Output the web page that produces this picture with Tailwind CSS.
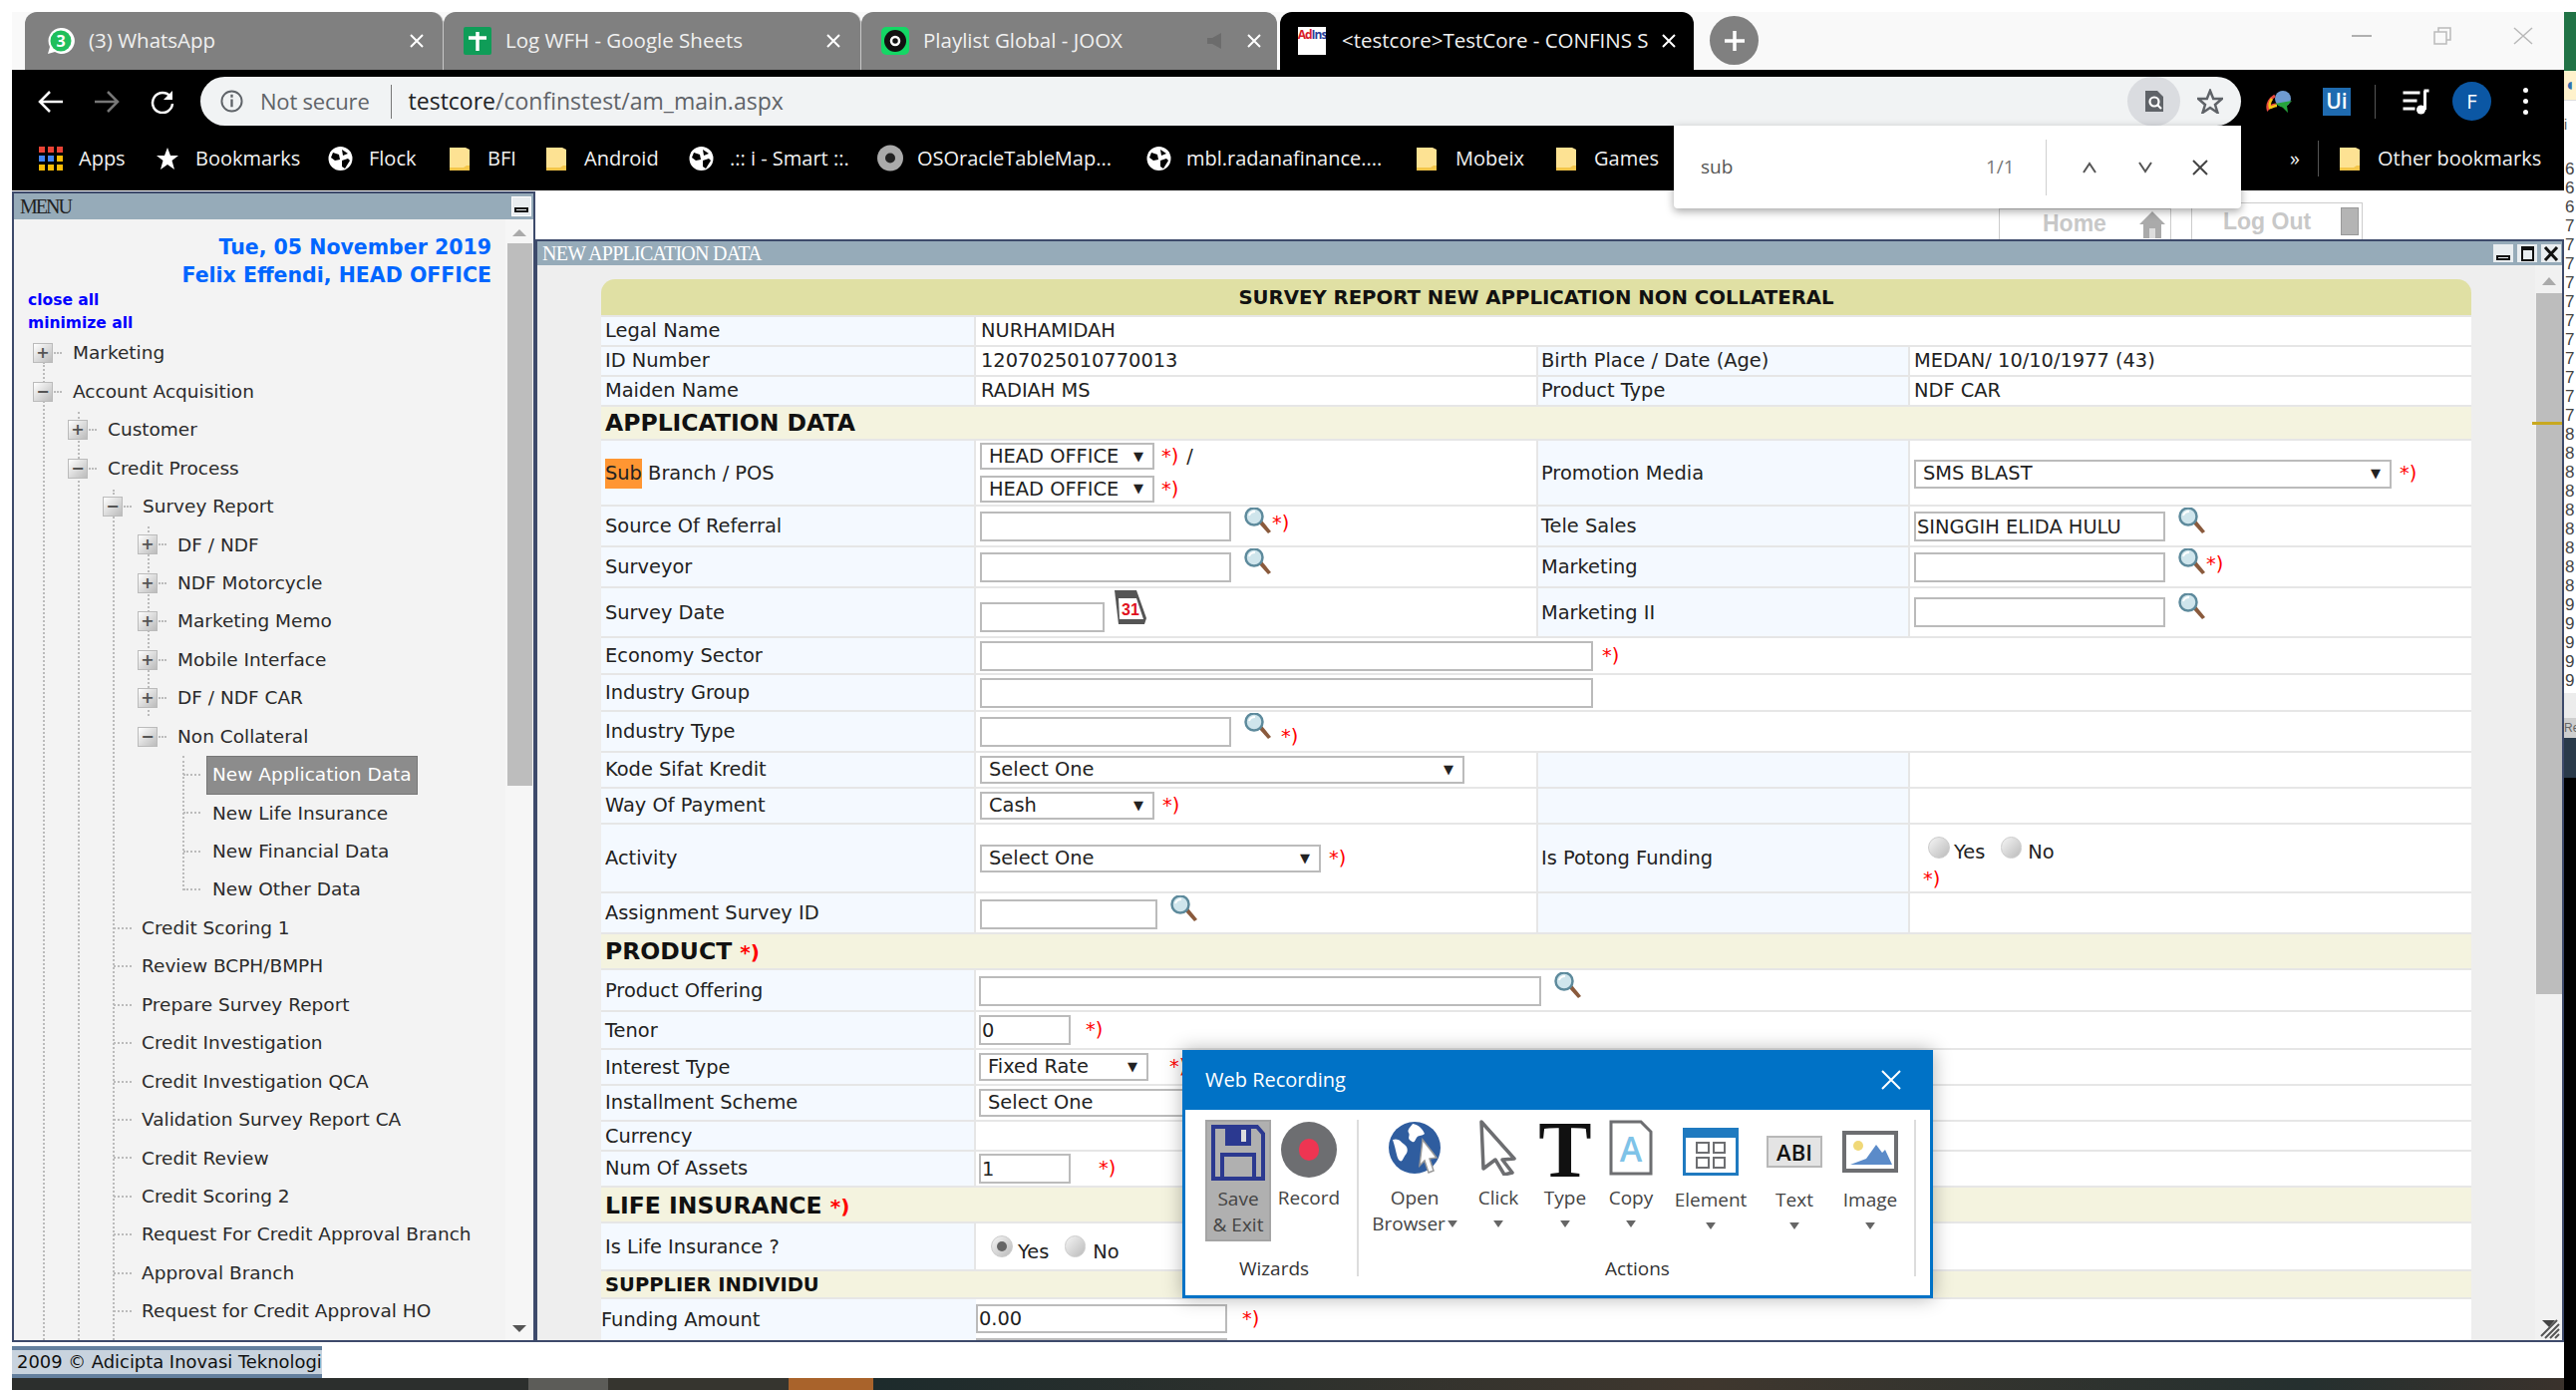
<!DOCTYPE html>
<html lang="en">
<head>
  <meta charset="UTF-8">
  <title>TestCore - CONFINS</title>
  <script src="https://cdn.jsdelivr.net/npm/@tailwindcss/browser@4"></script>
</head>
<body class="w-[2584px] h-[1394px] overflow-hidden bg-white relative flex font-['DejaVu_Sans',sans-serif] text-[#222]">
  <!-- shared icons -->
  <svg class="hidden">
    <symbol id="mag" viewBox="0 0 28 27">
      <path d="M15 16l9 10 3-2-9-11z" fill="#8a5a3c"/>
      <ellipse cx="10" cy="9" rx="8.5" ry="8.5" fill="#cfe5ec" stroke="#5d8a9c" stroke-width="2.5"/>
      <path d="M5 8c1-3 3-4 6-4" stroke="#fff" stroke-width="2" fill="none"/>
    </symbol>
    <symbol id="folder" viewBox="0 0 20 24">
      <path d="M0 1h16l4 2v20H0z" fill="#fde293"/>
      <path d="M0 21h14l3-2h3v5H0z" fill="#f4c64a"/>
    </symbol>
    <symbol id="globe" viewBox="0 0 25 24">
      <circle cx="12.500" cy="12" r="12" fill="#fff"/>
      <path d="M5 6l6 2 1 5-5 1-4-3zM14 14l6-2 2 2-5 8-3-2zM14 3l6 4-5 2z" fill="#000"/>
    </symbol>
    <symbol id="drop" viewBox="0 0 14 10">
      <path d="M0 0h14L7 10z" fill="#666"/>
    </symbol>
    <symbol id="tabx" viewBox="0 0 14 14">
      <path d="M1 1l12 12M13 1L1 13" stroke="#fff" stroke-width="2"/>
    </symbol>
  </svg>

  <div class="w-[12px] shrink-0"></div>

  <div class="w-[2560px] shrink-0 flex flex-col">
    <div class="h-[12px] bg-white"></div>

    <!-- tab strip -->
    <div class="h-[58px] bg-[#f9f9f9] flex pl-[13px] font-['Open_Sans',sans-serif] text-[20.500px] text-[#f0f0f0] relative">
      <div class="w-[420px] bg-[#808080] rounded-t-[12px] flex items-center pl-[22px] pr-[19px] border-r border-[#c8c8c8]">
        <svg class="w-[28px] h-[28px] shrink-0" viewBox="0 0 28 28"><path d="M14 1a13 13 0 1 1-6 24l-7 2 2-7A13 13 0 0 1 14 1z" fill="#fff"/><circle cx="14" cy="14" r="10.500" fill="#1fbf5c"/><text x="14" y="20" text-anchor="middle" font-size="16" font-weight="700" fill="#fff" font-family="Open Sans">3</text></svg>
        <span class="ml-[14px] flex-1 -mt-[2px]">(3) WhatsApp</span>
        <svg class="w-[14px] h-[14px]"><use href="#tabx"/></svg>
      </div>
      <div class="w-[419px] bg-[#808080] rounded-t-[12px] flex items-center pl-[20px] pr-[20px] border-r border-[#c8c8c8]">
        <svg class="w-[28px] h-[28px] shrink-0" viewBox="0 0 28 28"><rect width="28" height="28" rx="2" fill="#0f9d58"/><path d="M14 5v19M5 11h18" stroke="#fff" stroke-width="3.500"/></svg>
        <span class="ml-[14px] flex-1 -mt-[2px]">Log WFH - Google Sheets</span>
        <svg class="w-[14px] h-[14px]"><use href="#tabx"/></svg>
      </div>
      <div class="w-[417px] bg-[#808080] rounded-t-[12px] flex items-center pl-[20px] pr-[16px]">
        <svg class="w-[28px] h-[28px] shrink-0" viewBox="0 0 28 28"><rect width="28" height="28" rx="5" fill="#14d765"/><circle cx="14" cy="14" r="11" fill="#111"/><circle cx="14" cy="14" r="4" fill="none" stroke="#fff" stroke-width="2.500"/></svg>
        <span class="ml-[14px] flex-1 -mt-[2px]">Playlist Global - JOOX</span>
        <svg class="w-[16px] h-[16px] mr-[24px]" viewBox="0 0 16 16"><path d="M0 5h5l9-5v16l-9-5H0z" fill="#6c6c6c"/></svg>
        <svg class="w-[14px] h-[14px]"><use href="#tabx"/></svg>
      </div>
      <div class="ml-[3px] w-[415px] bg-black rounded-t-[12px] flex items-center pl-[18px] pr-[18px]">
        <div class="w-[28px] h-[28px] shrink-0 bg-white flex flex-col items-center overflow-hidden leading-none">
          <span class="text-[12px] font-bold text-[#d8202a] mt-[2px] tracking-[-1px]">Ad<span class="text-[#2a3f9a]">Ins</span></span>
        </div>
        <span class="ml-[16px] flex-1 -mt-[2px] whitespace-nowrap overflow-hidden">&lt;testcore&gt;TestCore - CONFINS S</span>
        <svg class="w-[14px] h-[14px] ml-[10px] shrink-0"><use href="#tabx"/></svg>
      </div>
      <div class="ml-[16px] mt-[4px] w-[49px] h-[49px] rounded-full bg-[#808080] flex items-center justify-center">
        <svg class="w-[24px] h-[24px]" viewBox="0 0 24 24"><path d="M12 2v20M2 12h20" stroke="#fff" stroke-width="3.500"/></svg>
      </div>
      <div class="flex-1 flex items-center justify-end pr-[31px] gap-[62px] pb-[10px]">
        <svg class="w-[20px] h-[4px]" viewBox="0 0 20 4"><path d="M0 2h20" stroke="#b0b0b0" stroke-width="2"/></svg>
        <svg class="w-[18px] h-[18px]" viewBox="0 0 18 18"><path d="M1 5h12v12H1zM5 5V1h12v12h-4" fill="none" stroke="#bbb" stroke-width="1.500"/></svg>
        <svg class="w-[20px] h-[18px]" viewBox="0 0 20 18"><path d="M1 1l18 16M19 1L1 17" stroke="#b8b8b8" stroke-width="1.500"/></svg>
      </div>
    </div>

    <!-- address bar -->
    <div class="h-[56px] bg-black flex items-center pt-[7px] relative font-['Open_Sans',sans-serif]">
      <div class="w-[189px] shrink-0 flex items-center pl-[26px] gap-[30px]">
        <svg class="w-[26px] h-[22px]" viewBox="0 0 26 22"><path d="M25 11H3M12 1L2 11l10 10" fill="none" stroke="#fff" stroke-width="2.500"/></svg>
        <svg class="w-[26px] h-[22px]" viewBox="0 0 26 22"><path d="M1 11h22M14 1l10 10-10 10" fill="none" stroke="#777" stroke-width="2.500"/></svg>
        <svg class="w-[26px] h-[24px]" viewBox="0 0 26 24"><path d="M21 7a10 10 0 1 0 2 7" fill="none" stroke="#fff" stroke-width="2.500"/><path d="M23 1v9H14z" fill="#fff"/></svg>
      </div>
      <div class="w-[2047px] h-[49px] bg-[#f1f3f4] rounded-full flex items-center pl-[20px] pr-[9px] text-[22px]">
        <svg class="w-[23px] h-[23px] shrink-0" viewBox="0 0 24 24"><circle cx="12" cy="12" r="10.500" fill="none" stroke="#5f6368" stroke-width="2"/><path d="M12 10v8M12 5v3" stroke="#5f6368" stroke-width="2.400"/></svg>
        <span class="ml-[17px] text-[#5f6368] tracking-[-0.2px]">Not secure</span>
        <div class="w-px h-[34px] bg-[#777] ml-[21px]"></div>
        <span class="ml-[17px] text-[#5f6368] text-[23px]"><span class="text-[#202124]">testcore</span>/confinstest/am_main.aspx</span>
        <div class="ml-auto w-[53px] h-[49px] rounded-full bg-[#dadce0] flex items-center justify-center">
          <svg class="w-[20px] h-[23px]" viewBox="0 0 20 23"><path d="M1 1h12l6 6v15H1z" fill="#5f6368"/><circle cx="10" cy="12" r="4.500" fill="none" stroke="#fff" stroke-width="2.200"/><path d="M13 15l4 4" stroke="#fff" stroke-width="2.200"/></svg>
        </div>
        <svg class="w-[26px] h-[25px] ml-[17px] mr-[9px]" viewBox="0 0 26 25"><path d="M13 2l3.200 8H25l-7 6 2.500 8-7.500-5-7.500 5L8 16l-7-6h8.800z" fill="none" stroke="#5f6368" stroke-width="2.500"/></svg>
      </div>
      <svg class="w-[27px] h-[24px] ml-[25px]" viewBox="0 0 27 24"><circle cx="17" cy="9" r="8" fill="#6f9bd1"/><path d="M9 6c-5 3-8 8-7 13 3-3 6-4 9-4" fill="none" stroke="#e9483f" stroke-width="3"/><path d="M6 9c-2 3-3 6-2 9 3-1 5-2 7-2" fill="none" stroke="#f5c518" stroke-width="2.500"/><path d="M9 14l17-3-5 5 1 7-5-5z" fill="#26a53c"/></svg>
      <div class="w-[28px] h-[28px] ml-[30px] bg-[#1f6bb0] text-white text-[21px] font-semibold flex items-center justify-center">Ui</div>
      <div class="w-px h-[34px] bg-[#555] ml-[24px]"></div>
      <svg class="w-[29px] h-[28px] ml-[26px]" viewBox="0 0 28 28"><path d="M1 5h17M1 13h14M1 21h12" stroke="#fff" stroke-width="3"/><path d="M22 3h5M23 3v19" stroke="#fff" stroke-width="3"/><circle cx="19" cy="22" r="4.500" fill="#fff"/></svg>
      <div class="w-[39px] h-[39px] ml-[22px] rounded-full bg-[#0b57a4] text-white text-[20px] flex items-center justify-center">F</div>
      <div class="ml-[32px] flex flex-col gap-[6px]">
        <div class="w-[5px] h-[5px] rounded-full bg-white"></div>
        <div class="w-[5px] h-[5px] rounded-full bg-white"></div>
        <div class="w-[5px] h-[5px] rounded-full bg-white"></div>
      </div>
    </div>

    <!-- bookmarks -->
    <div class="h-[65px] bg-black flex items-center pl-[27px] font-['Open_Sans',sans-serif] text-[20px] text-[#f2f2f2] whitespace-nowrap">
      <svg class="w-[24px] h-[24px] shrink-0" viewBox="0 0 24 24"><path fill="#ea4335" d="M0 0h6v6H0zM9 0h6v6H9zM18 0h6v6h-6z"/><path fill="#4285f4" d="M0 9h6v6H0zM9 9h6v6H9z"/><path fill="#fbbc05" d="M18 9h6v6h-6zM0 18h6v6H0zM9 18h6v6H9zM18 18h6v6h-6z"/></svg>
      <span class="w-[78px] ml-[16px] shrink-0">Apps</span>
      <svg class="w-[22px] h-[22px] shrink-0" viewBox="0 0 22 22"><path d="M11 0l3 8h8l-6.500 5 2.500 9-7-5-7 5 2.500-9L0 8h8z" fill="#fff"/></svg>
      <span class="w-[133px] ml-[17px] shrink-0">Bookmarks</span>
      <svg class="w-[25px] h-[24px] shrink-0"><use href="#globe"/></svg>
      <span class="w-[81px] ml-[16px] shrink-0">Flock</span>
      <svg class="w-[20px] h-[24px] shrink-0"><use href="#folder"/></svg>
      <span class="w-[59px] ml-[18px] shrink-0">BFI</span>
      <svg class="w-[20px] h-[24px] shrink-0"><use href="#folder"/></svg>
      <span class="w-[105px] ml-[18px] shrink-0">Android</span>
      <svg class="w-[25px] h-[24px] shrink-0"><use href="#globe"/></svg>
      <span class="w-[148px] ml-[16px] shrink-0">.:: i - Smart ::.</span>
      <svg class="w-[26px] h-[27px] shrink-0" viewBox="0 0 26 27"><circle cx="13" cy="13.500" r="13" fill="#aaa"/><circle cx="13" cy="13.500" r="5" fill="#222"/></svg>
      <span class="w-[230px] ml-[14px] shrink-0 overflow-hidden">OSOracleTableMap...</span>
      <svg class="w-[25px] h-[24px] shrink-0"><use href="#globe"/></svg>
      <span class="w-[231px] ml-[15px] shrink-0">mbl.radanafinance....</span>
      <svg class="w-[20px] h-[24px] shrink-0"><use href="#folder"/></svg>
      <span class="w-[101px] ml-[19px] shrink-0">Mobeix</span>
      <svg class="w-[20px] h-[24px] shrink-0"><use href="#folder"/></svg>
      <span class="w-[698px] ml-[18px] shrink-0">Games</span>
      <span class="w-[28px] shrink-0">»</span>
      <div class="w-px h-[36px] bg-[#555] shrink-0"></div>
      <svg class="w-[20px] h-[24px] ml-[21px] shrink-0"><use href="#folder"/></svg>
      <span class="ml-[18px] shrink-0">Other bookmarks</span>
    </div>

    <!-- application area -->
    <div class="h-[1155px] flex">
      <!-- left menu -->
      <aside class="w-[525px] shrink-0 mt-[1px] border-2 border-[#3d4a6b] flex flex-col">
        <div class="h-[26px] shrink-0 bg-[#96abb9] flex items-center justify-between pl-[6px] pr-[2px] font-['Liberation_Serif',serif] text-[20px] text-[#222] tracking-[-2px]">
          <span>MENU</span>
          <div class="w-[20px] h-[20px] bg-[#e9edf0] border border-white flex items-end justify-center pb-[3px]"><div class="w-[14px] h-[5px] border-2 border-[#111]"></div></div>
        </div>
        <div class="flex-1 flex min-h-0 bg-[#f3f3f3]">
          <div class="w-[493px] shrink-0 relative overflow-hidden">
            <!-- tree guides -->
            <div class="absolute left-[29px] top-[143px] bottom-0 border-l-2 border-dotted border-[#bbb]"></div>
            <div class="absolute left-[64px] top-[193px] bottom-0 border-l-2 border-dotted border-[#bbb]"></div>
            <div class="absolute left-[99px] top-[271px] bottom-0 border-l-2 border-dotted border-[#bbb]"></div>
            <div class="absolute left-[134px] top-[308px] h-[190px] border-l-2 border-dotted border-[#bbb]"></div>
            <div class="absolute left-[169px] top-[538px] h-[135px] border-l-2 border-dotted border-[#bbb]"></div>

            <div class="pt-[14px] pr-[14px] text-right text-[#0066ff] font-bold text-[20.500px] leading-[28px]">
              <div>Tue, 05 November 2019</div>
              <div>Felix Effendi, HEAD OFFICE</div>
            </div>
            <div class="pl-[14px] text-[#0000ff] font-bold text-[15.500px] leading-[23px]">
              <div>close all</div>
              <div>minimize all</div>
            </div>

            <div class="relative -mt-[1px] text-[18.500px] text-[#2a2a2a]">
              <div class="flex items-center h-[38.45px] pl-[19px]"><span class="w-[20px] h-[20px] bg-linear-to-br from-white to-[#bbb] border border-[#bbb] flex items-center justify-center text-[16px] font-bold leading-none text-[#555]">+</span><span class="w-[8px] ml-[1px] border-t-2 border-dotted border-[#bbb]"></span><span class="ml-[11px]">Marketing</span></div>
              <div class="flex items-center h-[38.45px] pl-[19px]"><span class="w-[20px] h-[20px] bg-linear-to-br from-white to-[#bbb] border border-[#bbb] flex items-center justify-center text-[16px] font-bold leading-none text-[#555]">−</span><span class="w-[8px] ml-[1px] border-t-2 border-dotted border-[#bbb]"></span><span class="ml-[11px]">Account Acquisition</span></div>
              <div class="flex items-center h-[38.45px] pl-[54px]"><span class="w-[20px] h-[20px] bg-linear-to-br from-white to-[#bbb] border border-[#bbb] flex items-center justify-center text-[16px] font-bold leading-none text-[#555]">+</span><span class="w-[8px] ml-[1px] border-t-2 border-dotted border-[#bbb]"></span><span class="ml-[11px]">Customer</span></div>
              <div class="flex items-center h-[38.45px] pl-[54px]"><span class="w-[20px] h-[20px] bg-linear-to-br from-white to-[#bbb] border border-[#bbb] flex items-center justify-center text-[16px] font-bold leading-none text-[#555]">−</span><span class="w-[8px] ml-[1px] border-t-2 border-dotted border-[#bbb]"></span><span class="ml-[11px]">Credit Process</span></div>
              <div class="flex items-center h-[38.45px] pl-[89px]"><span class="w-[20px] h-[20px] bg-linear-to-br from-white to-[#bbb] border border-[#bbb] flex items-center justify-center text-[16px] font-bold leading-none text-[#555]">−</span><span class="w-[8px] ml-[1px] border-t-2 border-dotted border-[#bbb]"></span><span class="ml-[11px]">Survey Report</span></div>
              <div class="flex items-center h-[38.45px] pl-[124px]"><span class="w-[20px] h-[20px] bg-linear-to-br from-white to-[#bbb] border border-[#bbb] flex items-center justify-center text-[16px] font-bold leading-none text-[#555]">+</span><span class="w-[8px] ml-[1px] border-t-2 border-dotted border-[#bbb]"></span><span class="ml-[11px]">DF / NDF</span></div>
              <div class="flex items-center h-[38.45px] pl-[124px]"><span class="w-[20px] h-[20px] bg-linear-to-br from-white to-[#bbb] border border-[#bbb] flex items-center justify-center text-[16px] font-bold leading-none text-[#555]">+</span><span class="w-[8px] ml-[1px] border-t-2 border-dotted border-[#bbb]"></span><span class="ml-[11px]">NDF Motorcycle</span></div>
              <div class="flex items-center h-[38.45px] pl-[124px]"><span class="w-[20px] h-[20px] bg-linear-to-br from-white to-[#bbb] border border-[#bbb] flex items-center justify-center text-[16px] font-bold leading-none text-[#555]">+</span><span class="w-[8px] ml-[1px] border-t-2 border-dotted border-[#bbb]"></span><span class="ml-[11px]">Marketing Memo</span></div>
              <div class="flex items-center h-[38.45px] pl-[124px]"><span class="w-[20px] h-[20px] bg-linear-to-br from-white to-[#bbb] border border-[#bbb] flex items-center justify-center text-[16px] font-bold leading-none text-[#555]">+</span><span class="w-[8px] ml-[1px] border-t-2 border-dotted border-[#bbb]"></span><span class="ml-[11px]">Mobile Interface</span></div>
              <div class="flex items-center h-[38.45px] pl-[124px]"><span class="w-[20px] h-[20px] bg-linear-to-br from-white to-[#bbb] border border-[#bbb] flex items-center justify-center text-[16px] font-bold leading-none text-[#555]">+</span><span class="w-[8px] ml-[1px] border-t-2 border-dotted border-[#bbb]"></span><span class="ml-[11px]">DF / NDF CAR</span></div>
              <div class="flex items-center h-[38.45px] pl-[124px]"><span class="w-[20px] h-[20px] bg-linear-to-br from-white to-[#bbb] border border-[#bbb] flex items-center justify-center text-[16px] font-bold leading-none text-[#555]">−</span><span class="w-[8px] ml-[1px] border-t-2 border-dotted border-[#bbb]"></span><span class="ml-[11px]">Non Collateral</span></div>
              <div class="flex items-center h-[38.45px] pl-[170px]"><span class="w-[17px] border-t-2 border-dotted border-[#bbb]"></span><span class="ml-[6px] px-[5px] h-[39px] flex items-center bg-[#8c8c8c] text-white border border-[#777]">New Application Data</span></div>
              <div class="flex items-center h-[38.45px] pl-[170px]"><span class="w-[17px] border-t-2 border-dotted border-[#bbb]"></span><span class="ml-[12px]">New Life Insurance</span></div>
              <div class="flex items-center h-[38.45px] pl-[170px]"><span class="w-[17px] border-t-2 border-dotted border-[#bbb]"></span><span class="ml-[12px]">New Financial Data</span></div>
              <div class="flex items-center h-[38.45px] pl-[170px]"><span class="w-[17px] border-t-2 border-dotted border-[#bbb]"></span><span class="ml-[12px]">New Other Data</span></div>
              <div class="flex items-center h-[38.45px] pl-[100px]"><span class="w-[18px] border-t-2 border-dotted border-[#bbb]"></span><span class="ml-[10px]">Credit Scoring 1</span></div>
              <div class="flex items-center h-[38.45px] pl-[100px]"><span class="w-[18px] border-t-2 border-dotted border-[#bbb]"></span><span class="ml-[10px]">Review BCPH/BMPH</span></div>
              <div class="flex items-center h-[38.45px] pl-[100px]"><span class="w-[18px] border-t-2 border-dotted border-[#bbb]"></span><span class="ml-[10px]">Prepare Survey Report</span></div>
              <div class="flex items-center h-[38.45px] pl-[100px]"><span class="w-[18px] border-t-2 border-dotted border-[#bbb]"></span><span class="ml-[10px]">Credit Investigation</span></div>
              <div class="flex items-center h-[38.45px] pl-[100px]"><span class="w-[18px] border-t-2 border-dotted border-[#bbb]"></span><span class="ml-[10px]">Credit Investigation QCA</span></div>
              <div class="flex items-center h-[38.45px] pl-[100px]"><span class="w-[18px] border-t-2 border-dotted border-[#bbb]"></span><span class="ml-[10px]">Validation Survey Report CA</span></div>
              <div class="flex items-center h-[38.45px] pl-[100px]"><span class="w-[18px] border-t-2 border-dotted border-[#bbb]"></span><span class="ml-[10px]">Credit Review</span></div>
              <div class="flex items-center h-[38.45px] pl-[100px]"><span class="w-[18px] border-t-2 border-dotted border-[#bbb]"></span><span class="ml-[10px]">Credit Scoring 2</span></div>
              <div class="flex items-center h-[38.45px] pl-[100px]"><span class="w-[18px] border-t-2 border-dotted border-[#bbb]"></span><span class="ml-[10px]">Request For Credit Approval Branch</span></div>
              <div class="flex items-center h-[38.45px] pl-[100px]"><span class="w-[18px] border-t-2 border-dotted border-[#bbb]"></span><span class="ml-[10px]">Approval Branch</span></div>
              <div class="flex items-center h-[38.45px] pl-[100px]"><span class="w-[18px] border-t-2 border-dotted border-[#bbb]"></span><span class="ml-[10px]">Request for Credit Approval HO</span></div>
            </div>
          </div>
          <!-- menu scrollbar -->
          <div class="flex-1 bg-[#f6f6f6] flex flex-col items-center pt-[10px] pb-[8px]">
            <div class="w-0 h-0 border-x-[7px] border-x-transparent border-b-[7px] border-b-[#aaa]"></div>
            <div class="w-[25px] h-[544px] bg-[#bdbdbd] mt-[7px]"></div>
            <div class="mt-auto w-0 h-0 border-x-[7px] border-x-transparent border-t-[7px] border-t-[#555]"></div>
          </div>
        </div>
      </aside>

      <!-- right column -->
      <div class="flex-1 flex flex-col min-w-0">
        <div class="h-[49px] shrink-0 flex justify-end items-end pr-[202px] font-['Liberation_Sans',sans-serif] font-bold text-[23px] text-[#c8c8c8] whitespace-nowrap">
          <div class="w-[173px] h-[31px] border-x border-t border-[#ccc] flex items-center pl-[43px] overflow-hidden leading-none">
            <span class="w-[96px] shrink-0 -mt-[2px]">Home</span>
            <svg class="w-[28px] h-[28px] shrink-0" viewBox="0 0 28 28"><path d="M14 1L1 14h4v14h18V14h4z" fill="#aaa"/><rect x="11" y="18" width="6" height="10" fill="#ddd"/></svg>
          </div>
          <div class="w-[172px] h-[37px] ml-[20px] border-x border-t border-[#ccc] flex items-center pl-[31px] overflow-hidden leading-none">
            <span class="w-[118px] shrink-0">Log Out</span>
            <div class="w-[18px] h-[28px] shrink-0 bg-[#b4b4b4] border border-[#999]"></div>
          </div>
        </div>

        <!-- new application panel -->
        <main class="flex-1 min-h-0 border-y-2 border-r-2 border-l-2 border-[#3d4a6b] flex flex-col">
          <div class="h-[24px] shrink-0 bg-[#96abb9] flex items-center justify-between pl-[5px] pr-[1px] font-['Liberation_Serif',serif] text-white text-[20px] tracking-[-0.75px]">
            <span>NEW APPLICATION DATA</span>
            <div class="flex gap-[4px]">
              <div class="w-[20px] h-[18px] bg-[#e9edf0] flex items-end justify-center pb-[2px]"><div class="w-[14px] h-[5px] border-2 border-[#111]"></div></div>
              <div class="w-[20px] h-[18px] bg-[#e9edf0] flex items-center justify-center"><div class="w-[13px] h-[15px] border-2 border-t-4 border-[#111]"></div></div>
              <div class="w-[20px] h-[18px] bg-[#e9edf0] flex items-center justify-center"><svg class="w-[16px] h-[15px]" viewBox="0 0 16 15"><path d="M2 1l12 13M14 1L2 14" stroke="#111" stroke-width="3"/></svg></div>
            </div>
          </div>

          <div class="flex-1 min-h-0 flex bg-[#eeeeee] relative overflow-hidden">
            <div class="w-[64px] shrink-0"></div>

            <!-- form table -->
            <div class="w-[1876px] shrink-0 pt-[14px] text-[19.400px]">
              <div class="h-[36px] pt-[2px] bg-[#e0e0a4] rounded-t-[14px] flex items-center justify-center font-bold text-[19.700px] text-[#111]">SURVEY REPORT NEW APPLICATION NON COLLATERAL</div>

              <div class="flex h-[30px] border-t-2 border-[#e6e6e6] bg-white">
                <div class="w-[376px] bg-[#f4f9ff] border-r-2 border-[#e6e6e6] pl-[4px] flex items-center">Legal Name</div>
                <div class="flex-1 pl-[5px] flex items-center">NURHAMIDAH</div>
              </div>
              <div class="flex h-[30px] border-t-2 border-[#e6e6e6] bg-white">
                <div class="w-[376px] bg-[#f4f9ff] border-r-2 border-[#e6e6e6] pl-[4px] flex items-center">ID Number</div>
                <div class="w-[562px] pl-[5px] flex items-center">1207025010770013</div>
                <div class="w-[375px] bg-[#f4f9ff] border-x-2 border-[#e6e6e6] pl-[3px] flex items-center">Birth Place / Date (Age)</div>
                <div class="flex-1 pl-[4px] flex items-center">MEDAN/ 10/10/1977 (43)</div>
              </div>
              <div class="flex h-[30px] border-t-2 border-[#e6e6e6] bg-white">
                <div class="w-[376px] bg-[#f4f9ff] border-r-2 border-[#e6e6e6] pl-[4px] flex items-center">Maiden Name</div>
                <div class="w-[562px] pl-[5px] flex items-center">RADIAH MS</div>
                <div class="w-[375px] bg-[#f4f9ff] border-x-2 border-[#e6e6e6] pl-[3px] flex items-center">Product Type</div>
                <div class="flex-1 pl-[4px] flex items-center">NDF CAR</div>
              </div>

              <div class="h-[36px] pt-[2px] border-y-2 border-[#e6e6e6] bg-[#f4f3df] flex items-center pl-[4px] font-bold text-[23.500px] text-[#111]">APPLICATION DATA</div>

              <div class="flex h-[64px] bg-white">
                <div class="w-[376px] bg-[#f4f9ff] border-r-2 border-[#e6e6e6] pl-[4px] pt-[2px] flex items-center"><span class="bg-[#ff9632]">Sub</span>&nbsp;Branch / POS</div>
                <div class="w-[562px] pl-[4px] flex flex-col justify-center gap-[3px]">
                  <div class="flex items-center"><div class="w-[175px] h-[27px] border-2 border-[#bbb] bg-white pl-[7px] pr-[9px] flex items-center justify-between">HEAD OFFICE<span class="text-[13px]">▼</span></div><span class="ml-[7px] text-[#f00]">*)</span><span class="ml-[8px]">/</span></div>
                  <div class="flex items-center"><div class="w-[175px] h-[27px] border-2 border-[#bbb] bg-white pl-[7px] pr-[9px] flex items-center justify-between">HEAD OFFICE<span class="text-[13px]">▼</span></div><span class="ml-[7px] text-[#f00]">*)</span></div>
                </div>
                <div class="w-[375px] bg-[#f4f9ff] border-x-2 border-[#e6e6e6] pl-[3px] pt-[2px] flex items-center">Promotion Media</div>
                <div class="flex-1 pl-[4px] pt-[2px] flex items-center"><div class="w-[479px] h-[29px] border-2 border-[#bbb] bg-white pl-[7px] pr-[9px] flex items-center justify-between">SMS BLAST<span class="text-[13px]">▼</span></div><span class="ml-[8px] text-[#f00]">*)</span></div>
              </div>

              <div class="flex h-[41px] border-t-2 border-[#e6e6e6] bg-white">
                <div class="w-[376px] bg-[#f4f9ff] border-r-2 border-[#e6e6e6] pl-[4px] flex items-center">Source Of Referral</div>
                <div class="w-[562px] pl-[4px] pt-[5px] flex items-start"><input class="w-[252px] h-[30px] border-2 border-[#bbb] bg-white"><svg class="w-[28px] h-[27px] ml-[13px] -mt-[4px]"><use href="#mag"/></svg><span class="text-[#f00] -mt-[3px]">*)</span></div>
                <div class="w-[375px] bg-[#f4f9ff] border-x-2 border-[#e6e6e6] pl-[3px] flex items-center">Tele Sales</div>
                <div class="flex-1 pl-[4px] pt-[5px] flex items-start"><input value="SINGGIH ELIDA HULU" class="w-[252px] h-[30px] border-2 border-[#bbb] bg-white pl-[1px]"><svg class="w-[28px] h-[27px] ml-[13px] -mt-[4px]"><use href="#mag"/></svg></div>
              </div>
              <div class="flex h-[41px] border-t-2 border-[#e6e6e6] bg-white">
                <div class="w-[376px] bg-[#f4f9ff] border-r-2 border-[#e6e6e6] pl-[4px] flex items-center">Surveyor</div>
                <div class="w-[562px] pl-[4px] pt-[5px] flex items-start"><input class="w-[252px] h-[30px] border-2 border-[#bbb] bg-white"><svg class="w-[28px] h-[27px] ml-[13px] -mt-[4px]"><use href="#mag"/></svg></div>
                <div class="w-[375px] bg-[#f4f9ff] border-x-2 border-[#e6e6e6] pl-[3px] flex items-center">Marketing</div>
                <div class="flex-1 pl-[4px] pt-[5px] flex items-start"><input class="w-[252px] h-[30px] border-2 border-[#bbb] bg-white"><svg class="w-[28px] h-[27px] ml-[13px] -mt-[4px]"><use href="#mag"/></svg><span class="text-[#f00] -mt-[3px]">*)</span></div>
              </div>
              <div class="flex h-[50px] border-t-2 border-[#e6e6e6] bg-white">
                <div class="w-[376px] bg-[#f4f9ff] border-r-2 border-[#e6e6e6] pl-[4px] pt-[2px] flex items-center">Survey Date</div>
                <div class="w-[562px] pl-[4px] pt-[14px] flex items-start">
                  <input class="w-[125px] h-[30px] border-2 border-[#bbb] bg-white">
                  <svg class="w-[36px] h-[36px] ml-[8px] -mt-[13px]" viewBox="0 0 36 36"><path d="M2 1h22l10 28-2 6H6z" fill="#555"/><path d="M6 9h18l7 21H7z" fill="#fff"/><text x="18" y="26" text-anchor="middle" font-size="16" font-weight="700" fill="#e01020" font-family="Liberation Sans">31</text></svg>
                </div>
                <div class="w-[375px] bg-[#f4f9ff] border-x-2 border-[#e6e6e6] pl-[3px] pt-[2px] flex items-center">Marketing II</div>
                <div class="flex-1 pl-[4px] pt-[9px] flex items-start"><input class="w-[252px] h-[30px] border-2 border-[#bbb] bg-white"><svg class="w-[28px] h-[27px] ml-[13px] -mt-[4px]"><use href="#mag"/></svg></div>
              </div>

              <div class="flex h-[37px] border-t-2 border-[#e6e6e6] bg-white">
                <div class="w-[376px] bg-[#f4f9ff] border-r-2 border-[#e6e6e6] pl-[4px] flex items-center">Economy Sector</div>
                <div class="flex-1 pl-[4px] flex items-center"><input class="w-[615px] h-[30px] border-2 border-[#bbb] bg-white"><span class="ml-[9px] text-[#f00]">*)</span></div>
              </div>
              <div class="flex h-[37px] border-t-2 border-[#e6e6e6] bg-white">
                <div class="w-[376px] bg-[#f4f9ff] border-r-2 border-[#e6e6e6] pl-[4px] flex items-center">Industry Group</div>
                <div class="flex-1 pl-[4px] flex items-center"><input class="w-[615px] h-[30px] border-2 border-[#bbb] bg-white"></div>
              </div>
              <div class="flex h-[41px] border-t-2 border-[#e6e6e6] bg-white">
                <div class="w-[376px] bg-[#f4f9ff] border-r-2 border-[#e6e6e6] pl-[4px] flex items-center">Industry Type</div>
                <div class="flex-1 pl-[4px] pt-[5px] flex items-start"><input class="w-[252px] h-[30px] border-2 border-[#bbb] bg-white"><svg class="w-[28px] h-[27px] ml-[13px] -mt-[4px]"><use href="#mag"/></svg><span class="ml-[9px] mt-[5px] text-[#f00]">*)</span></div>
              </div>

              <div class="flex h-[36px] border-t-2 border-[#e6e6e6] bg-white">
                <div class="w-[376px] bg-[#f4f9ff] border-r-2 border-[#e6e6e6] pl-[4px] flex items-center">Kode Sifat Kredit</div>
                <div class="w-[562px] pl-[4px] flex items-center"><div class="w-[486px] h-[28px] border-2 border-[#bbb] bg-white pl-[7px] pr-[9px] flex items-center justify-between">Select One<span class="text-[13px]">▼</span></div></div>
                <div class="w-[375px] bg-[#f4f9ff] border-x-2 border-[#e6e6e6]"></div>
                <div class="flex-1"></div>
              </div>
              <div class="flex h-[36px] border-t-2 border-[#e6e6e6] bg-white">
                <div class="w-[376px] bg-[#f4f9ff] border-r-2 border-[#e6e6e6] pl-[4px] flex items-center">Way Of Payment</div>
                <div class="w-[562px] pl-[4px] flex items-center"><div class="w-[175px] h-[28px] border-2 border-[#bbb] bg-white pl-[7px] pr-[9px] flex items-center justify-between">Cash<span class="text-[13px]">▼</span></div><span class="ml-[8px] text-[#f00]">*)</span></div>
                <div class="w-[375px] bg-[#f4f9ff] border-x-2 border-[#e6e6e6]"></div>
                <div class="flex-1"></div>
              </div>
              <div class="flex h-[69px] border-t-2 border-[#e6e6e6] bg-white">
                <div class="w-[376px] bg-[#f4f9ff] border-r-2 border-[#e6e6e6] pl-[4px] flex items-center">Activity</div>
                <div class="w-[562px] pl-[4px] flex items-center"><div class="w-[342px] h-[28px] border-2 border-[#bbb] bg-white pl-[7px] pr-[9px] flex items-center justify-between">Select One<span class="text-[13px]">▼</span></div><span class="ml-[8px] text-[#f00]">*)</span></div>
                <div class="w-[375px] bg-[#f4f9ff] border-x-2 border-[#e6e6e6] pl-[3px] flex items-center">Is Potong Funding</div>
                <div class="flex-1 pl-[18px] pt-[12px]">
                  <div class="flex items-start">
                    <span class="w-[22px] h-[22px] rounded-full bg-linear-to-br from-[#f5f5f5] to-[#bbb] border border-[#ccc]"></span><span class="ml-[4px] mt-[1px]">Yes</span>
                    <span class="ml-[16px] w-[21px] h-[22px] rounded-full bg-linear-to-br from-[#f5f5f5] to-[#bbb] border border-[#ccc]"></span><span class="ml-[6px] mt-[1px]">No</span>
                  </div>
                  <div class="text-[#f00] -ml-[5px] leading-[20px] mt-[3px]">*)</div>
                </div>
              </div>
              <div class="flex h-[41px] border-t-2 border-[#e6e6e6] bg-white">
                <div class="w-[376px] bg-[#f4f9ff] border-r-2 border-[#e6e6e6] pl-[4px] flex items-center">Assignment Survey ID</div>
                <div class="w-[562px] pl-[4px] pt-[6px] flex items-start"><input class="w-[178px] h-[30px] border-2 border-[#bbb] bg-white"><svg class="w-[28px] h-[27px] ml-[13px] -mt-[4px]"><use href="#mag"/></svg></div>
                <div class="w-[375px] bg-[#f4f9ff] border-x-2 border-[#e6e6e6]"></div>
                <div class="flex-1"></div>
              </div>

              <div class="h-[38px] pt-[2px] border-y-2 border-[#e6e6e6] bg-[#f4f3df] flex items-center pl-[4px] font-bold text-[23.500px] text-[#111]">PRODUCT<span class="ml-[8px] text-[#f00] text-[20px]">*)</span></div>

              <div class="flex h-[40px] bg-white">
                <div class="w-[376px] bg-[#f4f9ff] border-r-2 border-[#e6e6e6] pl-[4px] pt-[2px] flex items-center">Product Offering</div>
                <div class="flex-1 pl-[3px] pt-[6px] flex items-start"><input class="w-[564px] h-[30px] border-2 border-[#bbb] bg-white"><svg class="w-[28px] h-[27px] ml-[13px] -mt-[4px]"><use href="#mag"/></svg></div>
              </div>
              <div class="flex h-[38px] border-t-2 border-[#e6e6e6] bg-white">
                <div class="w-[376px] bg-[#f4f9ff] border-r-2 border-[#e6e6e6] pl-[4px] pt-[2px] flex items-center">Tenor</div>
                <div class="flex-1 pl-[3px] flex items-center"><input value="0" class="w-[92px] h-[30px] border-2 border-[#bbb] bg-white pl-[1px]"><span class="ml-[15px] text-[#f00]">*)</span></div>
              </div>
              <div class="flex h-[36px] border-t-2 border-[#e6e6e6] bg-white">
                <div class="w-[376px] bg-[#f4f9ff] border-r-2 border-[#e6e6e6] pl-[4px] pt-[1px] flex items-center">Interest Type</div>
                <div class="flex-1 pl-[3px] flex items-center"><div class="w-[170px] h-[28px] border-2 border-[#bbb] bg-white pl-[7px] pr-[9px] flex items-center justify-between">Fixed Rate<span class="text-[13px]">▼</span></div><span class="ml-[21px] text-[#f00]">*)</span></div>
              </div>
              <div class="flex h-[36px] border-t-2 border-[#e6e6e6] bg-white">
                <div class="w-[376px] bg-[#f4f9ff] border-r-2 border-[#e6e6e6] pl-[4px] flex items-center">Installment Scheme</div>
                <div class="flex-1 pl-[3px] flex items-center"><div class="w-[260px] h-[28px] border-2 border-[#bbb] bg-white pl-[7px] flex items-center">Select One</div></div>
              </div>
              <div class="flex h-[30px] border-t-2 border-[#e6e6e6] bg-white">
                <div class="w-[376px] bg-[#f4f9ff] border-r-2 border-[#e6e6e6] pl-[4px] pt-[1px] flex items-center">Currency</div>
                <div class="flex-1"></div>
              </div>
              <div class="flex h-[36px] border-t-2 border-[#e6e6e6] bg-white">
                <div class="w-[376px] bg-[#f4f9ff] border-r-2 border-[#e6e6e6] pl-[4px] flex items-center">Num Of Assets</div>
                <div class="flex-1 pl-[3px] flex items-center"><input value="1" class="w-[92px] h-[30px] border-2 border-[#bbb] bg-white pl-[1px]"><span class="ml-[28px] text-[#f00]">*)</span></div>
              </div>

              <div class="h-[38px] pt-[3px] border-y-2 border-[#e6e6e6] bg-[#f4f3df] flex items-center pl-[4px] font-bold text-[23.500px] text-[#111]">LIFE INSURANCE<span class="ml-[8px] text-[#f00] text-[20px]">*)</span></div>

              <div class="flex h-[46px] bg-white">
                <div class="w-[376px] bg-[#f4f9ff] border-r-2 border-[#e6e6e6] pl-[4px] pt-[2px] flex items-center">Is Life Insurance ?</div>
                <div class="flex-1 pl-[15px] pt-[12px] flex items-start">
                  <span class="w-[22px] h-[22px] rounded-full bg-linear-to-br from-[#f5f5f5] to-[#bbb] border border-[#ccc] flex items-center justify-center"><span class="w-[10px] h-[10px] rounded-full bg-[#666]"></span></span><span class="ml-[5px] mt-[2px]">Yes</span>
                  <span class="ml-[16px] w-[21px] h-[22px] rounded-full bg-linear-to-br from-[#f5f5f5] to-[#bbb] border border-[#ccc]"></span><span class="ml-[7px] mt-[2px]">No</span>
                </div>
              </div>
              <div class="h-[30px] pt-[2px] border-y-2 border-[#e6e6e6] bg-[#f4f3df] flex items-center pl-[4px] font-bold text-[19.500px] text-[#111]">SUPPLIER INDIVIDU</div>
              <div class="flex h-[41px] bg-white">
                <div class="w-[376px] bg-[#f4f9ff] flex items-center">Funding Amount</div>
                <div class="flex-1 flex flex-col">
                  <div class="flex items-center pt-[5px]"><input value="0.00" class="w-[252px] h-[29px] border-2 border-[#bbb] bg-white pl-[1px]"><span class="ml-[15px] text-[#f00]">*)</span></div>
                  <div class="w-[252px] h-[3px] mt-[5px] bg-[#bbb]"></div>
                </div>
              </div>
            </div>

            <div class="w-[64px] shrink-0"></div>

            <!-- panel scrollbar -->
            <div class="flex-1 bg-[#f1f1f1] flex flex-col items-center pt-[12px]">
              <div class="w-0 h-0 border-x-[7px] border-x-transparent border-b-[8px] border-b-[#aaa]"></div>
              <div class="w-[26px] h-[703px] bg-[#bdbdbd] mt-[8px]"></div>
            </div>
            <div class="absolute right-0 top-[157px] w-[30px] h-[3px] bg-[#c8a820]"></div>
            <svg class="absolute right-[2px] bottom-[1px] w-[20px] h-[20px]" viewBox="0 0 20 20"><path d="M2 1h13l-6 7z" fill="#444"/><path d="M1 17L17 1M5 19L19 5M10 19l9-9M15 19l4-4" stroke="#555" stroke-width="2"/></svg>
          </div>
        </main>
      </div>
    </div>

    <!-- footer -->
    <div class="h-[36px] pt-[4px] bg-white">
      <div class="w-[311px] h-[32px] bg-[#c8d3de] border-y-4 border-[#64809e] flex items-center pl-[5px] text-[17.900px] text-[#111] whitespace-nowrap overflow-hidden">2009 © Adicipta Inovasi Teknologi</div>
    </div>
    <div class="h-[12px] bg-[linear-gradient(90deg,#2c2f2d_0,#2c2f2d_518px,#5c5c58_518px,#5c5c58_598px,#36352f_598px,#36352f_779px,#a9632b_779px,#a9632b_864px,#1d2b2c_864px,#3f372e_1700px,#25302f_2300px,#3a322c_2560px)]"></div>
  </div>

  <!-- window behind, visible at the right edge -->
  <div class="flex-1 flex flex-col overflow-hidden bg-black font-['Liberation_Sans',sans-serif]">
    <div class="h-[12px] bg-white"></div>
    <div class="h-[59px] bg-[#217346]"></div>
    <div class="h-[29px] bg-[#fff2cc] text-[#2f6fb0] text-[18px] leading-[28px]">◖</div>
    <div class="h-[60px] bg-white text-[#555] text-[14px] pt-[14px] border-t border-[#ddd]">i</div>
    <div class="h-[535px] bg-white pl-[1px] text-[17px] leading-[19px] text-[#444] overflow-hidden">6<br>6<br>6<br>7<br>7<br>7<br>7<br>7<br>7<br>7<br>7<br>7<br>7<br>7<br>8<br>8<br>8<br>8<br>8<br>8<br>8<br>8<br>8<br>9<br>9<br>9<br>9<br>9</div>
    <div class="h-[25px] bg-[#ececec]"></div>
    <div class="h-[20px] bg-[#cfcfcf] text-[12px] text-[#666] leading-[20px]">Re</div>
    <div class="h-[40px] bg-[#2a3a4a]"></div>
  </div>

  <!-- chrome find bar -->
  <div class="absolute left-[1679px] top-[126px] w-[569px] h-[83px] bg-white rounded-b-[4px] shadow-[0_3px_8px_rgba(0,0,0,0.35)] flex items-center pl-[27px] font-['Open_Sans',sans-serif] text-[19px] text-[#555] z-20">
    <span class="w-[286px]">sub</span>
    <span class="w-[60px] text-[#777]">1/1</span>
    <div class="w-px h-[56px] bg-[#d0d0d0]"></div>
    <svg class="w-[14px] h-[12px] ml-[36px]" viewBox="0 0 14 12"><path d="M1 11l6-9 6 9" fill="none" stroke="#555" stroke-width="2"/></svg>
    <svg class="w-[14px] h-[12px] ml-[42px]" viewBox="0 0 14 12"><path d="M1 1l6 9 6-9" fill="none" stroke="#555" stroke-width="2"/></svg>
    <svg class="w-[16px] h-[16px] ml-[40px]" viewBox="0 0 16 16"><path d="M1 1l14 14M15 1L1 15" stroke="#444" stroke-width="2"/></svg>
  </div>

  <!-- web recording popup -->
  <div class="absolute left-[1186px] top-[1053px] w-[753px] h-[249px] bg-white border-[3px] border-[#0072c6] shadow-[0_0_18px_rgba(0,0,0,0.3)] flex flex-col font-['Open_Sans',sans-serif] text-[19px] text-[#444] z-30">
    <div class="h-[57px] shrink-0 bg-[#0072c6] flex items-center justify-between pl-[20px] pr-[29px] pb-[3px] text-white text-[20px]">
      <span>Web Recording</span>
      <svg class="w-[20px] h-[20px]" viewBox="0 0 20 20"><path d="M1 1l18 18M19 1L1 19" stroke="#fff" stroke-width="2"/></svg>
    </div>
    <div class="flex-1 flex pt-[10px] pl-[20px] leading-[26px] text-center">
      <!-- wizards -->
      <div class="w-[154px] shrink-0 flex flex-col h-[157px] border-r-2 border-[#ddd]">
        <div class="flex h-[122px]">
          <div class="w-[66px] h-[122px] bg-[#b0b0b0] border-2 border-[#a4a4a4] flex flex-col items-center">
            <svg class="w-[54px] h-[56px] mt-[3px] shrink-0" viewBox="0 0 54 56"><path d="M2 2h44l6 7v45H2z" fill="none" stroke="#2b3990" stroke-width="4"/><path d="M14 2h26v19H14z" fill="#2b3990"/><rect x="30" y="5" width="5" height="12" fill="#ddd"/><rect x="11" y="30" width="32" height="24" fill="none" stroke="#2b3990" stroke-width="4"/></svg>
            <div class="mt-[5px] text-[#444] leading-[26px]">Save<br>&amp; Exit</div>
          </div>
          <div class="w-[68px] ml-[4px] flex flex-col items-center">
            <div class="w-[56px] h-[56px] mt-[2px] rounded-full bg-[#6d6e71] flex items-center justify-center shrink-0"><div class="w-[20px] h-[22px] rounded-full bg-[#ee3552]"></div></div>
            <div class="mt-[7px]">Record</div>
          </div>
        </div>
        <div class="mt-auto mb-[-5px] pr-[14px] text-[#333]">Wizards</div>
      </div>
      <!-- actions -->
      <div class="w-[559px] shrink-0 flex flex-col h-[157px] border-r-2 border-[#ddd]">
        <div class="flex h-[122px]">
          <div class="w-[104px] ml-[4px] flex flex-col items-center">
            <svg class="w-[56px] h-[56px] shrink-0" viewBox="0 0 56 56"><circle cx="28" cy="28" r="26" fill="#2f5d9f"/><path d="M6 20c6-2 8 2 12 5s3 8 1 10-3 8-6 6-3-9-7-21zM26 4c6 1 10 5 12 10-4 3-6 1-8 4s-2 6-6 3 0-5-2-8 2-6 4-9z" fill="#fff"/><path d="M36 20l14 18-7 1 4 12-5 2-4-12-5 5z" fill="#fff" stroke="#999" stroke-width="1.500"/></svg>
            <div class="mt-[9px] whitespace-nowrap">Open<br>Browser<svg class="inline w-[10px] h-[7px] ml-[2px] align-[3px]"><use href="#drop"/></svg></div>
          </div>
          <div class="w-[50px] ml-[7px] flex flex-col items-center">
            <svg class="w-[40px] h-[56px] shrink-0" viewBox="0 0 40 56"><path d="M3 2l33 37-12 1 10 13-8 2-9-15-12 9z" fill="#fff" stroke="#6d6e71" stroke-width="3.500" stroke-linejoin="round"/></svg>
            <div class="mt-[9px]">Click</div>
            <svg class="w-[10px] h-[7px] mt-[10px]"><use href="#drop"/></svg>
          </div>
          <div class="w-[50px] ml-[17px] flex flex-col items-center">
            <div class="h-[56px] shrink-0 font-['Liberation_Serif',serif] font-bold text-[#111] text-[80px] leading-[60px]">T</div>
            <div class="mt-[9px]">Type</div>
            <svg class="w-[10px] h-[7px] mt-[10px]"><use href="#drop"/></svg>
          </div>
          <div class="w-[50px] ml-[16px] flex flex-col items-center">
            <svg class="w-[44px] h-[56px] shrink-0" viewBox="0 0 44 56"><path d="M2 2h30l10 10v42H2z" fill="#fff" stroke="#6d6e71" stroke-width="3"/><text x="22" y="42" text-anchor="middle" font-size="34" font-weight="600" fill="#7fc3e8" font-family="Open Sans">A</text></svg>
            <div class="mt-[9px]">Copy</div>
            <svg class="w-[10px] h-[7px] mt-[10px]"><use href="#drop"/></svg>
          </div>
          <div class="w-[74px] ml-[18px] flex flex-col items-center">
            <div class="w-[56px] h-[48px] mt-[8px] shrink-0 bg-[#1f7ac0] p-[3px] pt-[10px]"><div class="w-full h-full bg-white grid grid-cols-2 gap-[3px] px-[10px] py-[4px]"><div class="border-2 border-[#6d6e71]"></div><div class="border-2 border-[#6d6e71]"></div><div class="border-2 border-[#6d6e71]"></div><div class="border-2 border-[#6d6e71]"></div></div></div>
            <div class="mt-[11px]">Element</div>
            <svg class="w-[10px] h-[7px] mt-[10px]"><use href="#drop"/></svg>
          </div>
          <div class="w-[56px] ml-[19px] flex flex-col items-center">
            <div class="w-[56px] h-[32px] mt-[16px] mb-[8px] shrink-0 bg-[#e4e4e4] border-2 border-[#b8b8b8] flex items-center justify-center text-[#111] text-[22px] font-semibold leading-none">ABI</div>
            <div class="mt-[11px]">Text</div>
            <svg class="w-[10px] h-[7px] mt-[10px]"><use href="#drop"/></svg>
          </div>
          <div class="w-[60px] ml-[18px] flex flex-col items-center">
            <svg class="w-[56px] h-[42px] mt-[11px] mb-[3px] shrink-0" viewBox="0 0 56 42"><rect x="2" y="2" width="52" height="38" fill="#fff" stroke="#6d6e71" stroke-width="4"/><circle cx="16" cy="15" r="5" fill="#f0d878"/><path d="M8 34l16-6 10-14 6 8 3-3 7 15z" fill="#5b8bc9"/></svg>
            <div class="mt-[11px]">Image</div>
            <svg class="w-[10px] h-[7px] mt-[10px]"><use href="#drop"/></svg>
          </div>
        </div>
        <div class="mt-auto mb-[-5px] pl-[2px] text-[#333]">Actions</div>
      </div>
    </div>
  </div>
</body>
</html>
